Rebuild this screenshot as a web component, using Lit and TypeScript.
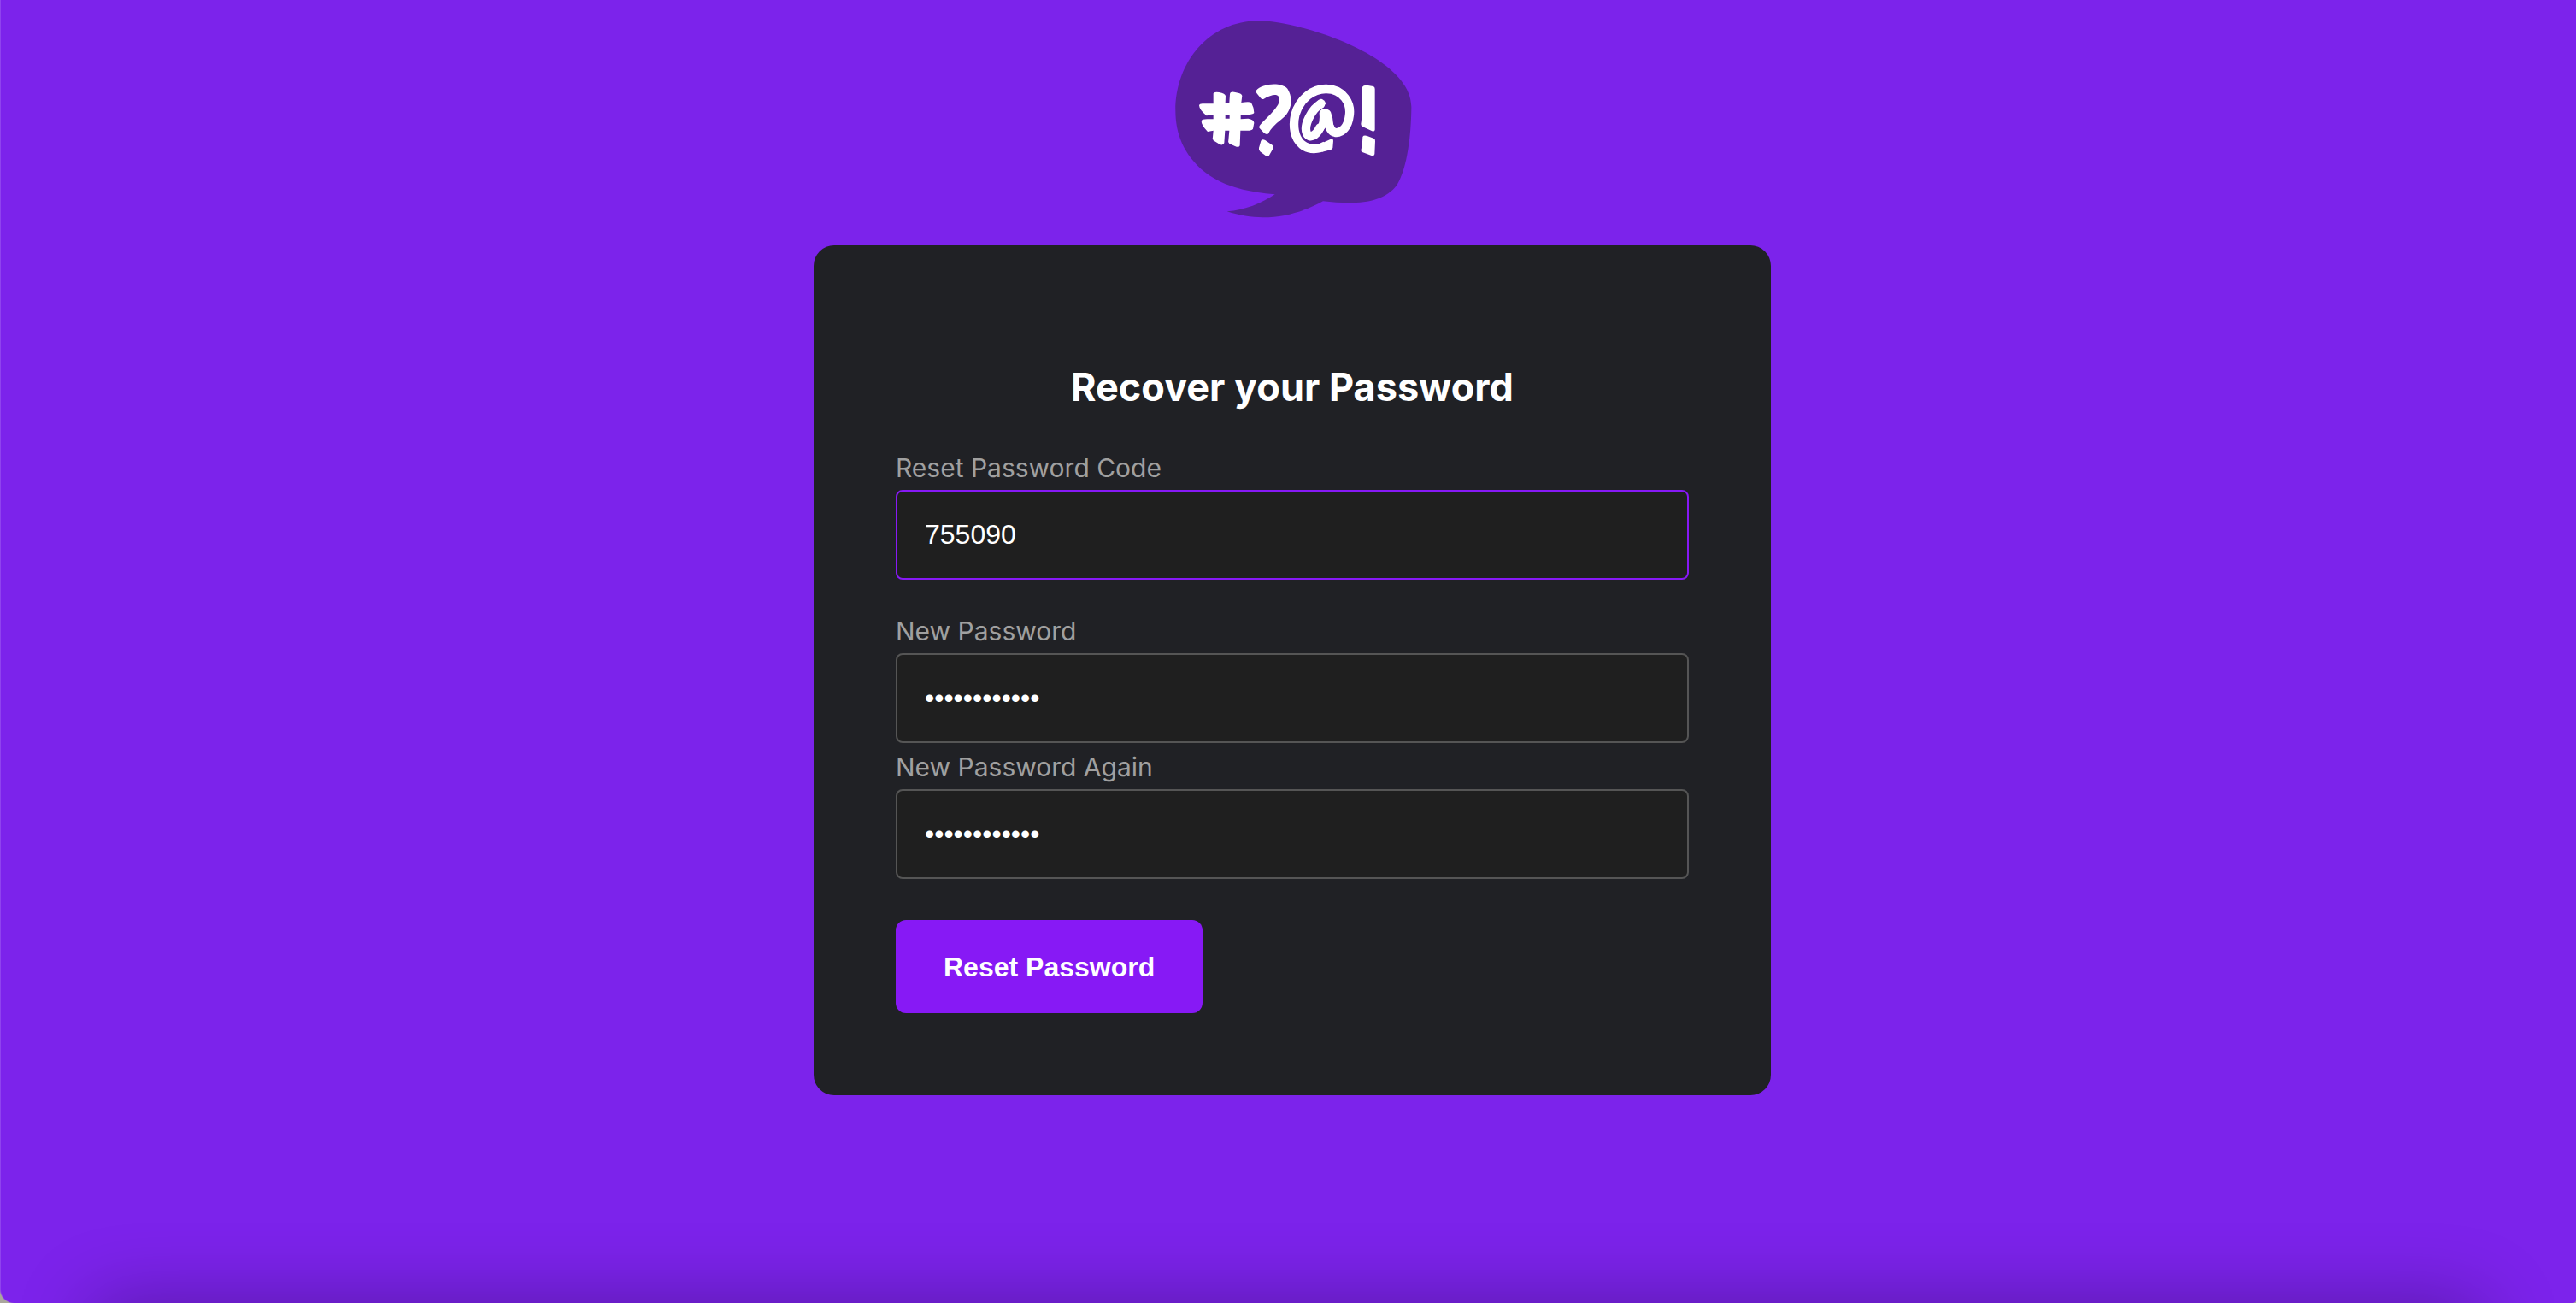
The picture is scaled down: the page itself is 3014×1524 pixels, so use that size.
import { LitElement, html, css } from "lit";
import { customElement } from "lit/decorators.js";

@customElement("brand-logo")
class BrandLogo extends LitElement {
  static styles = css`
    :host {
      display: block;
    }
    .logo {
      display: block;
      width: 280px;
      height: 232px;
    }
    .bubble {
      fill: #552195;
    }
    .mark {
      fill: #ffffff;
    }
    .stroke {
      fill: none;
      stroke: #ffffff;
      stroke-linejoin: round;
    }
    .round {
      stroke-linecap: round;
    }
  `;

  render() {
    return html`
      <svg class="logo" viewBox="37 44 840 696" role="img" aria-label="Speech bubble">
        <path
          class="bubble"
          d="M340 45C480 45 880 170 875 350C874 440 862 560 825 620C775 690 670 690 565 678C480 725 360 758 228 714C290 710 350 685 396 654C310 646 225 633 150 576C75 515 47 440 47 360C47 190 165 45 340 45Z"
        />
        <g class="mark">
          <path d="M180 300Q182 293 200 296Q222 300 223 309L222 333H236L238 302Q240 292 257 296Q280 299 281 308L278 332Q306 328 313 332Q323 350 323 368Q318 374 300 374H276V390L302 388Q322 391 323 403L319 424Q314 430 300 430H275L273 483Q270 491 256 485L236 476Q230 470 233 463L236 430H221L218 474Q214 483 203 479L180 465Q175 460 178 453L180 430L160 434Q137 411 138 396Q139 390 158 390H180V374L156 378Q131 358 130 342Q131 335 145 336H180ZM222 374V388H237V374Z" />
          <path d="M330 290C350 266 415 258 440 283C462 318 456 362 420 390C395 410 382 423 374 440Q368 447 357 438L343 423Q338 417 345 409C365 385 400 360 412 328C415 301 394 298 357 319Q350 322 344 314L332 299Q329 294 330 290Z" />
          <path d="M347 466Q352 459 362 464L387 481Q394 487 389 494L376 517Q372 523 363 518L344 504Q338 499 340 491Z" />
          <path d="M703 277Q707 270 719 271L741 275Q747 277 747 284V427Q746 435 737 432L703 416Q696 412 699 400Q700 392 701 380Z" />
          <path d="M704 452Q708 445 720 449L742 457Q749 460 748 467L746 513Q744 521 735 518L703 506Q697 503 699 495L702 485Z" />
        </g>
        <path
          class="stroke"
          stroke-width="31"
          d="M575 482C550 498 515 499 492 480C462 455 459 410 467 375C484 317 530 283 577 284C636 285 665 335 657 380C653 415 632 440 608 437C590 434 586 412 576 385"
        />
        <path class="mark" d="M562 474L592 460Q601 457 601 466L599 491Q597 497 585 499L562 505Z" />
        <path class="stroke round" stroke-width="31" d="M556 338C528 352 495 410 508 440C518 460 540 448 554 420" />
        <path class="mark" d="M540 331Q553 317 562 320Q574 327 574 337Q570 342 560 348Z" />
        <path class="mark" d="M552 368Q556 354 569 353Q585 354 592 365Q600 385 601 408L608 430L588 432L573 420L562 436L542 426Q556 400 552 368Z" />
      </svg>
    `;
  }
}

@customElement("text-field")
class TextField extends LitElement {
  static properties = {
    label: { type: String },
    name: { type: String },
    type: { type: String },
    value: { type: String },
    highlighted: { type: Boolean },
  };

  declare label: string;
  declare name: string;
  declare type: string;
  declare value: string;
  declare highlighted: boolean;

  static styles = css`
    :host {
      display: block;
    }
    .label {
      display: block;
      height: 40px;
      margin-bottom: 6px;
      font: 400 30px/40px Inter, "Liberation Sans", sans-serif;
      color: #a0a0a0;
    }
    .input {
      display: block;
      box-sizing: border-box;
      width: 100%;
      height: 105px;
      padding: 0 32px;
      border: 2px solid #555555;
      border-radius: 8px;
      outline: none;
      background: #1f1f1f;
      color: #ffffff;
      font: 400 32px/40px "Liberation Sans", Arial, sans-serif;
    }
    .input.highlighted,
    .input:focus {
      border-color: #8719f5;
    }
  `;

  render() {
    return html`
      <label class="label" for=${this.name}>${this.label}</label>
      <input
        class="input ${this.highlighted ? "highlighted" : ""}"
        id=${this.name}
        name=${this.name}
        type=${this.type}
        .value=${this.value}
      />
    `;
  }
}

@customElement("app-root")
class AppRoot extends LitElement {
  static styles = css`
    :host {
      display: block;
      background: #aaa69c;
    }
    .page {
      position: relative;
      display: flex;
      flex-direction: column;
      align-items: center;
      box-sizing: border-box;
      min-height: 100vh;
      padding: 24px 0 24px 10px;
      overflow: hidden;
      border-radius: 0 0 4px 16px;
      background: #7c23eb;
      box-shadow: inset 1px 0 rgba(255, 255, 255, 0.15);
    }
    .card {
      box-sizing: border-box;
      width: 100%;
      max-width: 1120px;
      margin-top: 31px;
      padding: 136px 96px 96px;
      border-radius: 24px;
      background: #202125;
    }
    .title {
      margin: 0 0 44px;
      text-align: center;
      font: 700 45px/60px Inter, "Liberation Sans", sans-serif;
      color: #ffffff;
    }
    .form {
      display: flex;
      flex-direction: column;
      align-items: stretch;
      gap: 8px;
    }
    .code {
      margin-bottom: 32px;
    }
    .submit {
      align-self: flex-start;
      height: 109px;
      margin-top: 40px;
      padding: 0 56px;
      border: 0;
      border-radius: 12px;
      background: #8719f5;
      color: #ffffff;
      font: 700 32px/40px "Liberation Sans", Arial, sans-serif;
    }
    .shade {
      position: absolute;
      top: 100%;
      left: 110px;
      right: 110px;
      height: 200px;
      box-shadow: 0 0 90px rgba(0, 0, 0, 0.3);
    }
  `;

  render() {
    return html`
      <main class="page">
        <brand-logo></brand-logo>
        <section class="card">
          <h1 class="title">Recover your Password</h1>
          <form class="form" @submit=${(e: Event) => e.preventDefault()}>
            <text-field class="code" label="Reset Password Code" name="code" type="text" value="755090" highlighted></text-field>
            <text-field label="New Password" name="password" type="password" value="password1234"></text-field>
            <text-field label="New Password Again" name="confirm" type="password" value="password1234"></text-field>
            <button class="submit" type="submit">Reset Password</button>
          </form>
        </section>
        <div class="shade"></div>
      </main>
    `;
  }
}
